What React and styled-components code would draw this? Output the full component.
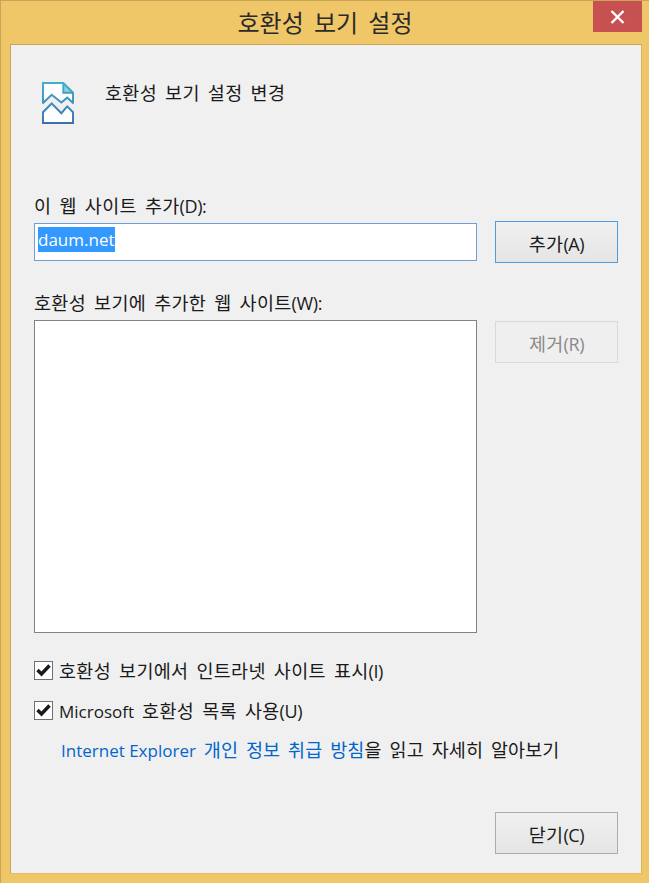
import React from "react";
import styled, { createGlobalStyle } from "styled-components";

const Global = createGlobalStyle`
  html, body {
    margin: 0;
    padding: 0;
    background: #f0c766;
  }
  * { box-sizing: border-box; }
`;

const fontStack = `"Open Sans", "Noto Sans CJK KR", sans-serif`;

const Window = styled.div`
  width: 649px;
  height: 883px;
  display: flex;
  flex-direction: column;
  background: #f0c768;
  border: 1px solid #c9a655;
  border-bottom: 0;
  border-right: 0;
  font-family: ${fontStack};
  font-size: 18.5px;
  word-spacing: 3px;
  letter-spacing: 0.3px;
  color: #1a1a1a;
  position: relative;
`;

const TitleBar = styled.div`
  height: 43px;
  flex: none;
  display: flex;
  align-items: center;
  justify-content: center;
  padding-bottom: 3px;
  font-size: 24px;
  word-spacing: 4px;
  letter-spacing: 0;
  color: #2a2a2a;
`;

const CloseBox = styled.div`
  position: absolute;
  top: 0;
  left: 592px;
  width: 49px;
  height: 31px;
  background: #c75050;
  display: flex;
  align-items: center;
  justify-content: center;
`;

const Panel = styled.div`
  width: 632px;
  height: 830px;
  margin-left: 9px;
  background: #f0f0f0;
  border: 1px solid #c9a655;
  border-bottom-color: #e0bd68;
  border-right-color: #d8b660;
  padding: 37px 23px 19px 23px;
  display: flex;
  flex-direction: column;
`;

const Header = styled.div`
  display: flex;
  align-items: flex-start;
  gap: 31px;
  padding-left: 8px;
  height: 112px;
`;

const HeaderText = styled.div`
  margin-top: -1px;
  line-height: 24px;
  white-space: nowrap;
`;

const Form = styled.div`
  display: grid;
  grid-template-columns: 443px 123px;
  column-gap: 18px;
`;

const Label = styled.div`
  line-height: 24px;
  height: 27px;
  grid-column: 1 / 3;
  white-space: nowrap;
`;

const Paren = styled.span`
  font-size: 18px;
  letter-spacing: -0.4px;
`;

const Latin = styled.span`
  font-size: 17px;
  word-spacing: 0;
  letter-spacing: 0;
`;

const SiteInput = styled.div`
  height: 38px;
  margin-top: 2px;
  background: #fff;
  border: 1px solid #6f9ed8;
  padding: 3px;
  font-size: 17px;
  letter-spacing: 0;
`;

const Selected = styled.span`
  display: inline-block;
  height: 25px;
  line-height: 25px;
  background: #3399ff;
  color: #fff;
`;

const Button = styled.div`
  width: 123px;
  height: 42px;
  display: flex;
  align-items: center;
  justify-content: center;
  padding-top: 1px;
  border: 1px solid ${(props) => (props.$focus ? "#4f9bdc" : props.$disabled ? "#d9d9d9" : "#acacac")};
  background: ${(props) => (props.$disabled ? "#efefef" : "linear-gradient(#f0f0f0, #e5e5e5)")};
  color: ${(props) => (props.$disabled ? "#8a8a8a" : "#1a1a1a")};
`;

const ListLabel = styled(Label)`
  margin-top: 28px;
  margin-bottom: 6px;
  height: 23px;
`;

const ListBox = styled.div`
  height: 313px;
  background: #fff;
  border: 1px solid #828282;
`;

const RemoveButton = styled(Button)`
  margin-top: 1px;
`;

const CheckRow = styled.div`
  display: flex;
  align-items: center;
  gap: 6px;
  height: 20px;
  margin-top: ${(props) => props.$top}px;
  white-space: nowrap;
`;

const CheckText = styled.span`
  display: block;
`;

const Box = styled.div`
  width: 19px;
  height: 19px;
  flex: none;
  background: #fff;
  border: 1px solid #707070;
  display: flex;
  align-items: center;
  justify-content: center;
`;

const LinkRow = styled.div`
  margin-top: 18px;
  padding-left: 27px;
  line-height: 24px;
  letter-spacing: 0.1px;
  white-space: nowrap;
`;

const LinkText = styled.span`
  color: #0066cc;
`;

const Footer = styled.div`
  margin-top: auto;
  display: flex;
  justify-content: flex-end;
`;

const IconSvg = styled.svg`
  flex: none;
  width: 32px;
  height: 42px;
`;

const Check = () => (
  <svg width="17" height="17" viewBox="0 0 17 17">
    <path d="M2.5 8 L6.5 12 L14.5 3.5" fill="none" stroke="#1a1a1a" strokeWidth="3.4" />
  </svg>
);

const CloseIcon = () => (
  <svg width="15" height="14" viewBox="0 0 15 14">
    <path d="M1.5 1 L13.5 13 M13.5 1 L1.5 13" stroke="#fff" strokeWidth="2.4" />
  </svg>
);

const PageIcon = () => (
  <IconSvg viewBox="0 0 33 43" preserveAspectRatio="none">
    <defs>
      <linearGradient id="pageGrad" gradientUnits="userSpaceOnUse" x1="0" y1="0" x2="0" y2="43">
        <stop offset="0" stopColor="#3fb0cc" />
        <stop offset="1" stopColor="#3a6fae" />
      </linearGradient>
    </defs>
    <path d="M1 21 V1 H22 L32 11 V21 L26 16 L20 21 L10 13 Z" fill="#fff" />
    <path d="M1 31 L10 22 L20 32 L26 25 L32 31 V42 H1 Z" fill="#fff" />
    <path d="M22 1 L32 11 H22 Z" fill="#8fd0e0" />
    <g fill="none" stroke="url(#pageGrad)" strokeWidth="2">
      <path d="M1 21 V1 H22 L32 11 V21" />
      <path d="M22 1 V11 H32" />
      <path d="M0.5 22 L10 13 L20 21 L26 16 L32.5 22" />
      <path d="M0.5 31.5 L10 22 L20 32 L26 25 L32 31 V42 H1 V31" />
    </g>
  </IconSvg>
);

export default function App() {
  return (
    <>
      <Global />
      <Window>
        <TitleBar>호환성 보기 설정</TitleBar>
        <CloseBox>
          <CloseIcon />
        </CloseBox>
        <Panel>
          <Header>
            <PageIcon />
            <HeaderText>호환성 보기 설정 변경</HeaderText>
          </Header>
          <Form>
            <Label>
              이 웹 사이트 추가<Paren>(D):</Paren>
            </Label>
            <SiteInput>
              <Selected>daum.net</Selected>
            </SiteInput>
            <Button $focus>
              <span>
                추가<Paren>(A)</Paren>
              </span>
            </Button>
            <ListLabel>
              호환성 보기에 추가한 웹 사이트<Paren>(W):</Paren>
            </ListLabel>
            <ListBox />
            <RemoveButton $disabled>
              <span>
                제거<Paren>(R)</Paren>
              </span>
            </RemoveButton>
          </Form>
          <CheckRow $top={27}>
            <Box>
              <Check />
            </Box>
            <CheckText>
              호환성 보기에서 인트라넷 사이트 표시<Paren>(I)</Paren>
            </CheckText>
          </CheckRow>
          <CheckRow $top={20}>
            <Box>
              <Check />
            </Box>
            <CheckText>
              <Latin>Microsoft</Latin> 호환성 목록 사용<Paren>(U)</Paren>
            </CheckText>
          </CheckRow>
          <LinkRow>
            <LinkText>
              <Latin>Internet Explorer</Latin> 개인 정보 취급 방침
            </LinkText>
            을 읽고 자세히 알아보기
          </LinkRow>
          <Footer>
            <Button>
              <span>
                닫기<Paren>(C)</Paren>
              </span>
            </Button>
          </Footer>
        </Panel>
      </Window>
    </>
  );
}
